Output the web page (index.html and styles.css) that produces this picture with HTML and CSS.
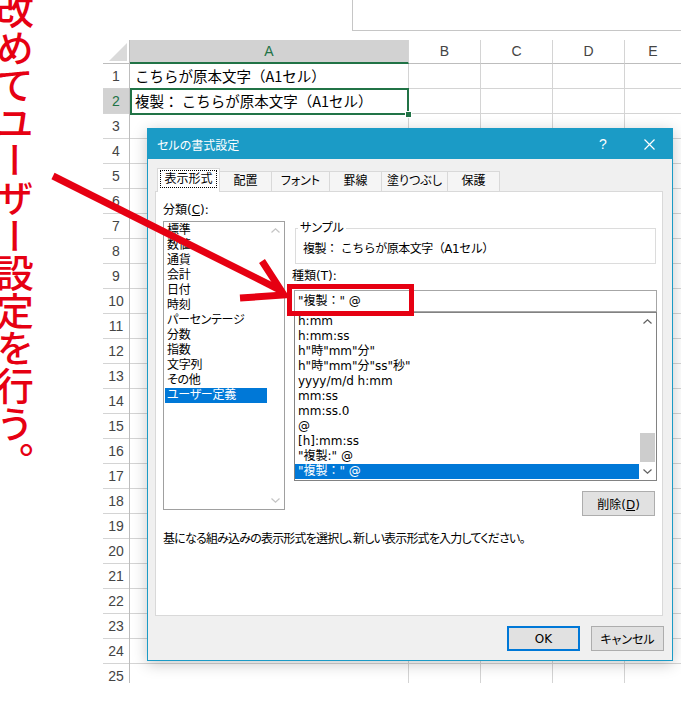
FILE: index.html
```html
<!DOCTYPE html>
<html>
<head>
<meta charset="UTF-8">
<title>セルの書式設定</title>
<link rel="stylesheet" href="styles.css">
</head>
<body>
<div class="page">

	<div class="topbar"><div class="fbox"></div></div>

	<div class="sheet">
		<div class="corner"><span class="tri"></span></div>
		<div class="colhead">
			<div class="ch a">A</div>
			<div class="ch b">B</div>
			<div class="ch b">C</div>
			<div class="ch b">D</div>
			<div class="ch e">E</div>
		</div>
		<div class="rowhead">
			<div class="rn">1</div>
			<div class="rn sel">2</div>
			<div class="rn">3</div>
			<div class="rn">4</div>
			<div class="rn">5</div>
			<div class="rn">6</div>
			<div class="rn">7</div>
			<div class="rn">8</div>
			<div class="rn">9</div>
			<div class="rn">10</div>
			<div class="rn">11</div>
			<div class="rn">12</div>
			<div class="rn">13</div>
			<div class="rn">14</div>
			<div class="rn">15</div>
			<div class="rn">16</div>
			<div class="rn">17</div>
			<div class="rn">18</div>
			<div class="rn">19</div>
			<div class="rn">20</div>
			<div class="rn">21</div>
			<div class="rn">22</div>
			<div class="rn">23</div>
			<div class="rn">24</div>
			<div class="rn">25</div>
		</div>
		<div class="cells">
			<div class="col a">
				<div class="cell">こちらが原本文字（A1セル）</div>
				<div class="cell active">複製： こちらが原本文字（A1セル）<span class="handle"></span></div>
			</div>
			<div class="col b"></div>
			<div class="col b"></div>
			<div class="col b"></div>
			<div class="col e"></div>
		</div>
	</div>

	<!-- セルの書式設定ダイアログ -->
	<div class="dialog">
		<div class="titlebar">
			<div class="title">セルの書式設定</div>
			<div class="tbtn">?</div>
			<div class="tbtn">
				<svg width="11" height="11" viewBox="0 0 11 11"><path d="M0.5 0.5L10.5 10.5M10.5 0.5L0.5 10.5" stroke="#fff" stroke-width="1.2"/></svg>
			</div>
		</div>
		<div class="dbody">
			<div class="tabs">
				<div class="tab on" style="width:63px"><span>表示形式</span></div>
				<div class="tab" style="width:52px">配置</div>
				<div class="tab" style="width:58px">フォント</div>
				<div class="tab" style="width:52px">罫線</div>
				<div class="tab" style="width:66px">塗りつぶし</div>
				<div class="tab" style="width:52px">保護</div>
			</div>
			<div class="panel">
				<div class="pgrid">
					<div class="leftcol">
						<div class="lbl">分類(<u>C</u>):</div>
						<div class="list1">
							<div class="items">
								<div class="it">標準</div>
								<div class="it">数値</div>
								<div class="it">通貨</div>
								<div class="it">会計</div>
								<div class="it">日付</div>
								<div class="it">時刻</div>
								<div class="it">パーセンテージ</div>
								<div class="it">分数</div>
								<div class="it">指数</div>
								<div class="it">文字列</div>
								<div class="it">その他</div>
								<div class="it on">ユーザー定義</div>
							</div>
							<div class="sb">
								<div class="arr"><svg width="9" height="5" viewBox="0 0 9 5"><path d="M0.5 4.5L4.5 0.8L8.5 4.5" fill="none" stroke="#c4c4c4" stroke-width="1.2"/></svg></div>
								<div class="arr"><svg width="9" height="5" viewBox="0 0 9 5"><path d="M0.5 0.5L4.5 4.2L8.5 0.5" fill="none" stroke="#c4c4c4" stroke-width="1.2"/></svg></div>
							</div>
						</div>
					</div>
					<div class="rightcol">
						<fieldset class="sample">
							<legend>サンプル</legend>
							<div class="stext">複製： こちらが原本文字（A1セル）</div>
						</fieldset>
						<div class="lbl2">種類(T):</div>
						<div class="input">"複製：" @</div>
						<div class="list2">
							<div class="items2">
								<div class="it2">h:mm</div>
								<div class="it2">h:mm:ss</div>
								<div class="it2">h"時"mm"分"</div>
								<div class="it2">h"時"mm"分"ss"秒"</div>
								<div class="it2">yyyy/m/d h:mm</div>
								<div class="it2">mm:ss</div>
								<div class="it2">mm:ss.0</div>
								<div class="it2">@</div>
								<div class="it2">[h]:mm:ss</div>
								<div class="it2">"複製:" @</div>
								<div class="it2 on">"複製：" @</div>
							</div>
							<div class="sb2">
								<div class="arr"><svg width="9" height="5" viewBox="0 0 9 5"><path d="M0.5 4.5L4.5 0.8L8.5 4.5" fill="none" stroke="#606060" stroke-width="1.2"/></svg></div>
								<div class="track"><div class="thumb"></div></div>
								<div class="arr"><svg width="9" height="5" viewBox="0 0 9 5"><path d="M0.5 0.5L4.5 4.2L8.5 0.5" fill="none" stroke="#606060" stroke-width="1.2"/></svg></div>
							</div>
						</div>
						<button class="btn del">削除(<u>D</u>)</button>
					</div>
				</div>
				<div class="desc">基になる組み込みの表示形式を選択し、新しい表示形式を入力してください。</div>
			</div>
		</div>
		<div class="foot">
			<button class="btn ok">OK</button>
			<button class="btn">キャンセル</button>
		</div>
	</div>

	<!-- 注釈 -->
	<div class="note">改めてユーザー設定を行う。</div>
	<svg class="arrow" width="681" height="724" viewBox="0 0 681 724">
		<line x1="53" y1="176" x2="280" y2="290" stroke="#e60012" stroke-width="7"/>
		<polyline points="262,261 284,295 240,298" fill="none" stroke="#e60012" stroke-width="7"/>
	</svg>
	<div class="redbox"></div>

</div>
</body>
</html>
```

FILE: styles.css
```css
*{
	box-sizing: border-box;
}
body{
	margin: 0;
	background: #fff;
	font-family: "DejaVu Sans", "Noto Sans CJK JP", sans-serif;
}
.page{
	position: relative;
	width: 681px;
	height: 724px;
	overflow: hidden;
}

/* 上の数式バー */
.topbar{
	height: 40px;
	padding-left: 352px;
}
.fbox{
	height: 31px;
	border: 1px solid #c6c6c6;
	border-top: none;
	border-right: none;
}

/* シート */
.sheet{
	margin-left: 103px;
	display: grid;
	grid-template-columns: 27px 551px;
	grid-template-rows: 24px 619px;
}
.corner{
	display: flex;
	align-items: flex-end;
	justify-content: flex-end;
	padding: 0 2px 2px 0;
	border-right: 1px solid #bdbdbd;
	border-bottom: 1px solid #bdbdbd;
}
.tri{
	width: 18px;
	height: 18px;
	background: #dadada;
	clip-path: polygon(100% 0, 100% 100%, 0 100%);
}
.colhead{
	display: flex;
}
.ch{
	flex: none;
	height: 24px;
	border-right: 1px solid #d4d4d4;
	border-bottom: 1px solid #bdbdbd;
	text-align: center;
	font: 14px/23px "Liberation Sans", sans-serif;
	color: #444;
}
.ch.a{
	width: 279px;
	background: #d2d2d2;
	color: #217346;
	border-bottom: 2px solid #217346;
	line-height: 22px;
}
.ch.b{ width: 72px; }
.ch.e{ width: 56px; border-right: none; }

.rowhead{
	overflow: hidden;
	border-right: 1px solid #bdbdbd;
}
.rn{
	height: 25px;
	border-bottom: 1px solid #d4d4d4;
	text-align: center;
	font: 14px/24px "Liberation Sans", sans-serif;
	color: #444;
}
.rn.sel{
	background: #d2d2d2;
	color: #217346;
}

.cells{
	display: flex;
	overflow: hidden;
	background: repeating-linear-gradient(to bottom, transparent 0, transparent 24px, #d4d4d4 24px, #d4d4d4 25px);
}
.col{
	flex: none;
	height: 100%;
	border-right: 1px solid #d4d4d4;
}
.col.a{ width: 279px; }
.col.b{ width: 72px; }
.col.e{ width: 56px; border-right: none; }
.cell{
	position: relative;
	height: 25px;
	padding-left: 5px;
	font: 14.5px/24px "Noto Sans CJK JP", sans-serif;
	color: #000;
	white-space: nowrap;
}
.cell.active::after{
	content: "";
	position: absolute;
	left: 0;
	top: -1px;
	right: -1px;
	bottom: -1px;
	border: 2px solid #217346;
}
.handle{
	position: absolute;
	right: -4px;
	bottom: -4px;
	width: 7px;
	height: 7px;
	background: #217346;
	border: 1px solid #fff;
	z-index: 1;
}

/* ダイアログ */
.dialog{
	position: absolute;
	left: 147px;
	top: 128px;
	width: 526px;
	height: 533px;
	border: 1px solid #1b9bc6;
	background: #f0f0f0;
	box-shadow: 0 3px 14px rgba(0,0,0,0.22);
	font-size: 12px;
	font-feature-settings: "palt";
	color: #000;
}
.titlebar{
	height: 30px;
	display: flex;
	align-items: center;
	padding-left: 9px;
	background: #1b9bc6;
	color: #fff;
	font-family: "Noto Sans CJK JP", sans-serif;
}
.title{
	flex: 1;
}
.tbtn{
	width: 46px;
	height: 30px;
	display: flex;
	align-items: center;
	justify-content: center;
	font: 14px "Liberation Sans", sans-serif;
}
.dbody{
	padding: 9px 9px 0 7px;
}
.tabs{
	position: relative;
	z-index: 1;
	display: flex;
	align-items: flex-end;
	height: 23px;
	padding-left: 2px;
}
.tab{
	flex: none;
	height: 20px;
	border: 1px solid #d9d9d9;
	border-left: none;
	border-bottom: none;
	background: #f5f5f5;
	text-align: center;
	line-height: 18px;
}
.tab.on{
	height: 24px;
	margin-bottom: -1px;
	border-left: 1px solid #d9d9d9;
	background: #fff;
	line-height: 20px;
}
.tab.on span{
	outline: 1px dotted #000;
	padding: 1px 3px;
}
.panel{
	height: 425px;
	background: #fff;
	border: 1px solid #d9d9d9;
	padding: 11px 5px 0 7px;
}
.pgrid{
	display: grid;
	grid-template-columns: 122px 363px;
	column-gap: 9px;
}
.lbl{
	height: 18px;
	line-height: 14px;
}
.list1{
	height: 289px;
	border: 1px solid #a0a0a0;
	display: flex;
}
.items{
	flex: 1;
	padding: 1px 0 0 1px;
}
.it{
	height: 15px;
	line-height: 15px;
	padding-left: 2px;
	white-space: nowrap;
	letter-spacing: -0.3px;
}
.it.on{
	background: #0078d7;
	color: #fff;
}
.sb{
	width: 17px;
	display: flex;
	flex-direction: column;
	justify-content: space-between;
}
.arr{
	height: 17px;
	display: flex;
	align-items: center;
	justify-content: center;
}

.rightcol{
	display: flex;
	flex-direction: column;
}
.sample{
	margin: 18px 1px 0 1px;
	padding: 7px 6px 6px 7px;
	border: 1px solid #dcdcdc;
}
.sample legend{
	margin-left: -5px;
	padding: 0 2px;
	line-height: 14px;
}
.stext{
	line-height: 15px;
	white-space: nowrap;
	font-feature-settings: normal;
	letter-spacing: -0.5px;
}
.lbl2{
	margin: 5px 0 0 -2px;
	line-height: 14px;
}
.input{
	margin-top: 7px;
	height: 22px;
	border: 1px solid #a6a6a6;
	padding-left: 3px;
	line-height: 20px;
	font-feature-settings: normal;
}
.list2{
	height: 169px;
	border: 1px solid #828282;
	display: flex;
}
.items2{
	flex: 1;
	padding-top: 1px;
}
.it2{
	height: 15px;
	line-height: 15px;
	padding-left: 3px;
	white-space: nowrap;
}
.it2.on{
	background: #0078d7;
	color: #fff;
	font-feature-settings: normal;
}
.sb2{
	width: 17px;
	display: flex;
	flex-direction: column;
}
.track{
	flex: 1;
}
.thumb{
	margin: 103px 1px 0 1px;
	height: 29px;
	background: #cdcdcd;
}

.btn{
	width: 73px;
	height: 25px;
	padding: 0;
	background: #e1e1e1;
	border: 1px solid #adadad;
	font: 12px "DejaVu Sans", "Noto Sans CJK JP", sans-serif;
	font-feature-settings: "palt";
	color: #000;
}
.del{
	align-self: flex-end;
	margin: 10px 2px 0 0;
}
.desc{
	margin-top: 16px;
	line-height: 14px;
	white-space: nowrap;
	letter-spacing: -0.8px;
}
.foot{
	display: flex;
	justify-content: flex-end;
	gap: 11px;
	padding: 10px 8px 0 0;
}
.ok{
	border-color: #0078d7;
	box-shadow: inset 0 0 0 1px #0078d7;
}

/* 注釈 */
.note{
	position: absolute;
	left: -4px;
	top: -9px;
	writing-mode: vertical-rl;
	font: 500 37.6px/1 "Noto Sans CJK JP", sans-serif;
	color: #e60012;
}
.arrow{
	position: absolute;
	left: 0;
	top: 0;
}
.redbox{
	position: absolute;
	left: 287px;
	top: 284px;
	width: 127px;
	height: 32px;
	border: 5px solid #e60012;
}
```
